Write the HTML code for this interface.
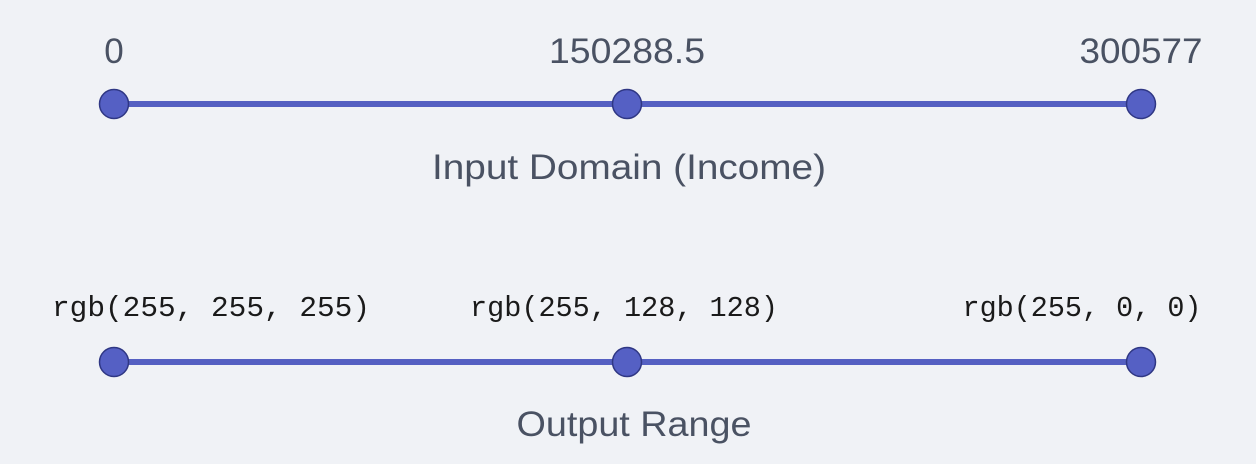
<!DOCTYPE html>
<html><head><style>
html,body{margin:0;padding:0;background:#f0f2f6;}
svg{display:block}
.s{font-family:"Liberation Sans",sans-serif;fill:#4a5263;font-size:35px}
.m{font-family:"Liberation Mono",monospace;fill:#1a1a1a;font-size:29px}
</style></head><body>
<svg width="1256" height="464" viewBox="0 0 1256 464">
<rect width="1256" height="464" fill="#f0f2f6"/>
<text class="s" x="114" y="63" text-anchor="middle">0</text>
<text class="s" x="627" y="63" text-anchor="middle" textLength="156" lengthAdjust="spacingAndGlyphs">150288.5</text>
<text class="s" x="1141" y="63" text-anchor="middle" textLength="123" lengthAdjust="spacingAndGlyphs">300577</text>
<line x1="114" y1="104" x2="1141" y2="104" stroke="#5560c2" stroke-width="6"/>
<g fill="#5560c4" stroke="#2f3784" stroke-width="1.5">
<circle cx="114" cy="104" r="14.5"/><circle cx="627" cy="104" r="14.5"/><circle cx="1141" cy="104" r="14.5"/>
</g>
<text class="s" x="629" y="179" text-anchor="middle" textLength="394" lengthAdjust="spacingAndGlyphs">Input Domain (Income)</text>
<text class="m" x="211" y="316" text-anchor="middle" textLength="318" lengthAdjust="spacingAndGlyphs">rgb(255, 255, 255)</text>
<text class="m" x="624" y="316" text-anchor="middle" textLength="308" lengthAdjust="spacingAndGlyphs">rgb(255, 128, 128)</text>
<text class="m" x="1082" y="316" text-anchor="middle" textLength="239" lengthAdjust="spacingAndGlyphs">rgb(255, 0, 0)</text>
<line x1="114" y1="362" x2="1141" y2="362" stroke="#5560c2" stroke-width="6"/>
<g fill="#5560c4" stroke="#2f3784" stroke-width="1.5">
<circle cx="114" cy="362" r="14.5"/><circle cx="627" cy="362" r="14.5"/><circle cx="1141" cy="362" r="14.5"/>
</g>
<text class="s" x="634" y="436" text-anchor="middle" textLength="235" lengthAdjust="spacingAndGlyphs">Output Range</text>
</svg>
</body></html>
